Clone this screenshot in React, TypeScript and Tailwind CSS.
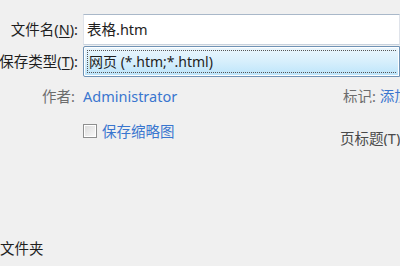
import React from "react";

const font = { fontFamily: '"Noto Sans", "Noto Sans CJK SC", sans-serif' };

export default function App() {
  return (
    <div
      className="w-[400px] h-[266px] bg-[#f0f0f0] overflow-hidden flex flex-col text-[14.5px] leading-none text-[#1e1e1e]"
      style={font}
    >
      <div className="flex items-center mt-[14px] h-[31px]">
        <div className="w-[78px] shrink-0 flex justify-end whitespace-nowrap">
          文件名(<span className="underline underline-offset-2">N</span>):
        </div>
        <div className="ml-[5px] flex-1 h-[31px] bg-white border border-[#dfe3ea] border-t-[#a9b8c9] border-b-[#c7d2de] flex items-center pl-[3px] whitespace-nowrap">
          表格.htm
        </div>
      </div>
      <div className="flex items-center mt-[1px] h-[31px]">
        <div className="w-[78px] shrink-0 flex justify-end whitespace-nowrap">
          保存类型(<span className="underline underline-offset-2">T</span>):
        </div>
        <div className="ml-[5px] flex-1 h-[31px] border border-[#6f93b6] rounded-l-[2px] p-[1px] bg-white">
          <div className="h-full bg-gradient-to-b from-[#eaf6fd] via-[#d7effc] to-[#bde5fb] p-[2px]">
            <div className="h-full border border-dotted border-[#555] border-r-0 flex items-center pl-[1px] whitespace-nowrap text-[14px]">
              网页 (*.htm;*.html)
            </div>
          </div>
        </div>
      </div>
      <div className="flex items-center mt-[11px] h-[16px]">
        <div className="w-[78px] shrink-0 flex justify-end whitespace-nowrap text-[#6d6d6d] pr-[3px]">
          作者:
        </div>
        <div className="ml-[5px] text-[#3a76cf] whitespace-nowrap">Administrator</div>
        <div className="ml-auto w-[57px] shrink-0 whitespace-nowrap overflow-hidden">
          <span className="text-[#6d6d6d]">标记: </span>
          <span className="text-[#3a76cf]">添加标记</span>
        </div>
      </div>
      <div className="flex items-start mt-[12px]">
        <div className="w-[83px] shrink-0" />
        <div className="flex items-center gap-[5px] mt-[8px]">
          <div className="w-[14px] h-[14px] border border-[#8e8f8f] bg-white p-[1px]">
            <div className="w-full h-full bg-gradient-to-br from-[#dcdcdc] to-[#f8f8f8]" />
          </div>
          <span className="text-[#3a76cf] whitespace-nowrap">保存缩略图</span>
        </div>
        <div className="ml-auto w-[60px] shrink-0 mt-[15px] whitespace-nowrap overflow-hidden text-[#4a4a4a]">
          页标题(<span className="underline underline-offset-2">T</span>)
        </div>
      </div>
      <div className="mt-[95px] whitespace-nowrap">文件夹</div>
    </div>
  );
}
